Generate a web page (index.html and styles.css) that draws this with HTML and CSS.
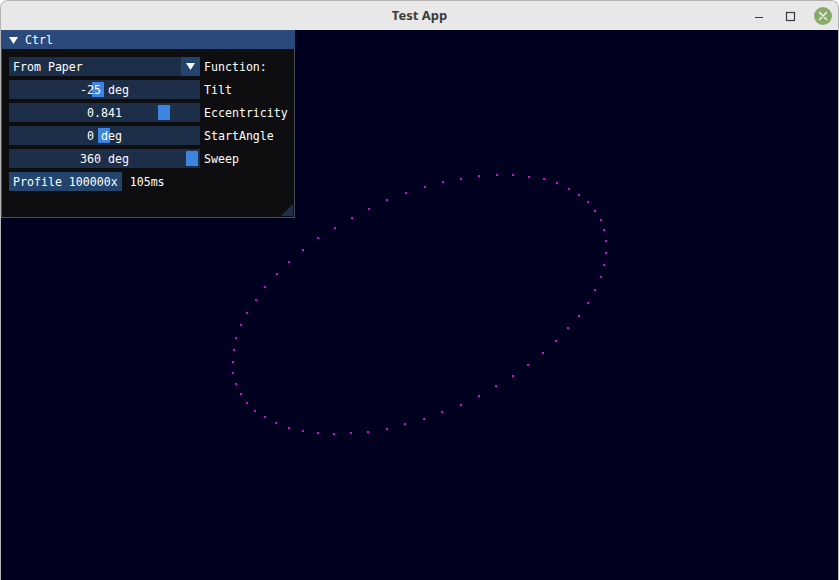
FILE: index.html
```html
<!DOCTYPE html>
<html>
<head>
<meta charset="utf-8">
<link rel="stylesheet" href="styles.css">
</head>
<body>
<div class="window">
  <div class="titlebar">
    <div class="title">Test App</div>
    <div class="controls">
      <svg class="ctl min" width="12" height="12" viewBox="0 0 12 12"><line x1="1" y1="7.5" x2="9" y2="7.5" stroke="#3c3c3c" stroke-width="1.2"/></svg>
      <svg class="ctl max" width="12" height="12" viewBox="0 0 12 12"><rect x="2.5" y="2.5" width="8" height="8" fill="none" stroke="#3c3c3c" stroke-width="1.2"/></svg>
      <div class="close"><svg width="18" height="18" viewBox="0 0 18 18"><path d="M5.5 5.5 L12.5 12.5 M12.5 5.5 L5.5 12.5" stroke="#fff" stroke-width="1.4" stroke-linecap="round"/></svg></div>
    </div>
  </div>
  <div class="canvas">
    <svg class="plot" width="837" height="549" viewBox="1 30 837 549">
      <g fill="#e000e0">
        <rect x="405" y="192" width="2" height="2"/><rect x="386" y="199" width="2" height="2"/><rect x="368" y="208" width="2" height="2"/><rect x="351" y="217" width="2" height="2"/><rect x="334" y="227" width="2" height="2"/><rect x="317" y="237" width="2" height="2"/><rect x="302" y="249" width="2" height="2"/><rect x="288" y="261" width="2" height="2"/><rect x="276" y="273" width="2" height="2"/><rect x="264" y="286" width="2" height="2"/><rect x="255" y="299" width="2" height="2"/>
        <rect x="246" y="312" width="2" height="2"/><rect x="240" y="324" width="2" height="2"/><rect x="235" y="337" width="2" height="2"/><rect x="233" y="349" width="2" height="2"/><rect x="232" y="361" width="2" height="2"/><rect x="232" y="372" width="2" height="2"/><rect x="235" y="383" width="2" height="2"/><rect x="240" y="393" width="2" height="2"/><rect x="246" y="402" width="2" height="2"/><rect x="254" y="410" width="2" height="2"/><rect x="264" y="416" width="2" height="2"/><rect x="275" y="422" width="2" height="2"/><rect x="288" y="427" width="2" height="2"/><rect x="302" y="430" width="2" height="2"/><rect x="317" y="432" width="2" height="2"/><rect x="333" y="433" width="2" height="2"/><rect x="350" y="432" width="2" height="2"/><rect x="367" y="431" width="2" height="2"/><rect x="386" y="428" width="2" height="2"/><rect x="404" y="423" width="2" height="2"/>
        <rect x="423" y="418" width="2" height="2"/><rect x="441" y="411" width="2" height="2"/><rect x="460" y="404" width="2" height="2"/><rect x="478" y="395" width="2" height="2"/><rect x="495" y="385" width="2" height="2"/><rect x="512" y="375" width="2" height="2"/><rect x="527" y="364" width="2" height="2"/><rect x="542" y="352" width="2" height="2"/><rect x="555" y="340" width="2" height="2"/><rect x="567" y="327" width="2" height="2"/><rect x="578" y="315" width="2" height="2"/><rect x="587" y="302" width="2" height="2"/><rect x="594" y="289" width="2" height="2"/>
        <rect x="600" y="276" width="2" height="2"/><rect x="603" y="264" width="2" height="2"/><rect x="605" y="252" width="2" height="2"/><rect x="605" y="240" width="2" height="2"/><rect x="603" y="229" width="2" height="2"/><rect x="600" y="219" width="2" height="2"/><rect x="594" y="210" width="2" height="2"/><rect x="587" y="201" width="2" height="2"/><rect x="578" y="194" width="2" height="2"/><rect x="568" y="188" width="2" height="2"/><rect x="556" y="182" width="2" height="2"/><rect x="543" y="178" width="2" height="2"/><rect x="528" y="176" width="2" height="2"/><rect x="512" y="174" width="2" height="2"/><rect x="496" y="174" width="2" height="2"/><rect x="478" y="175" width="2" height="2"/><rect x="460" y="178" width="2" height="2"/><rect x="442" y="181" width="2" height="2"/><rect x="424" y="186" width="2" height="2"/>
      </g>
    </svg>

    <div class="panel">
      <div class="panel-title">
        <svg class="collapse" width="9" height="7" viewBox="0 0 9 7"><polygon points="0,0 9,0 4.5,7" fill="#fff"/></svg>
        <span class="txt">Ctrl</span>
      </div>
      <div class="panel-body">
        <div class="row">
          <div class="frame combo">
            <span class="combo-text txt">From Paper</span>
            <div class="combo-btn"><svg width="9" height="7" viewBox="0 0 9 7"><polygon points="0,0 9,0 4.5,7" fill="#fff"/></svg></div>
          </div>
          <span class="label txt">Function:</span>
        </div>
        <div class="row">
          <div class="frame slider"><div class="grab" style="left:83px"></div><span class="val txt">-25 deg</span></div>
          <span class="label txt">Tilt</span>
        </div>
        <div class="row">
          <div class="frame slider"><div class="grab" style="left:149px"></div><span class="val txt">0.841</span></div>
          <span class="label txt">Eccentricity</span>
        </div>
        <div class="row">
          <div class="frame slider"><div class="grab" style="left:89px"></div><span class="val txt">0 deg</span></div>
          <span class="label txt">StartAngle</span>
        </div>
        <div class="row">
          <div class="frame slider"><div class="grab" style="left:177px"></div><span class="val txt">360 deg</span></div>
          <span class="label txt">Sweep</span>
        </div>
        <div class="row">
          <div class="button"><span class="txt">Profile 100000x</span></div>
          <span class="timing txt">105ms</span>
        </div>
      </div>
      <svg class="grip" width="12" height="12" viewBox="0 0 12 12"><polygon points="12,0 12,12 0,12" fill="#1c2f4c"/></svg>
    </div>
  </div>
</div>
</body>
</html>
```

FILE: styles.css
```css
html, body {
  margin: 0;
  padding: 0;
  background: #ffffff;
}

.window {
  width: 839px;
  height: 580px;
  box-sizing: border-box;
  border: 1px solid #b4b4b4;
  border-bottom: none;
  border-radius: 8px 8px 0 0;
  overflow: hidden;
  display: flex;
  flex-direction: column;
}

.titlebar {
  height: 29px;
  flex: none;
  background: #e8e8e8;
  position: relative;
  display: flex;
  align-items: center;
  justify-content: center;
}

.title {
  font-family: "Noto Sans", "DejaVu Sans", sans-serif;
  font-weight: bold;
  font-size: 13px;
  color: #3c3c3c;
  margin-top: -1px;
}

.controls {
  position: absolute;
  right: 0;
  top: 0;
  height: 29px;
  display: flex;
  align-items: center;
}

.ctl {
  display: block;
}

.min {
  margin-right: 18px;
}

.max {
  margin-right: 18px;
}

.close {
  width: 18px;
  height: 18px;
  border-radius: 50%;
  background: #8aaa6c;
  margin-right: 6px;
}

.close svg {
  display: block;
}

.canvas {
  flex: 1;
  background: #00001f;
  position: relative;
}

.plot {
  position: absolute;
  left: 0;
  top: 0;
  display: block;
}

.panel {
  position: absolute;
  left: 0;
  top: 0;
  width: 294px;
  height: 188px;
  box-sizing: border-box;
  background: #0e0e10;
  border: 1px solid #4c4c58;
  border-top: none;
  font-family: "DejaVu Sans Mono", "Liberation Mono", monospace;
  font-size: 11.6px;
  color: #ffffff;
}

.txt {
  line-height: 13px;
  padding-top: 2px;
}

.panel-title {
  height: 19px;
  background: #294a7a;
  margin: 0 -1px 0 -1px;
  display: flex;
  align-items: center;
  padding-left: 8px;
}

.collapse {
  display: block;
  margin-right: 7px;
  margin-top: 1px;
}

.panel-body {
  padding: 8px 0 0 7px;
  display: flex;
  flex-direction: column;
  gap: 4px;
}

.row {
  display: flex;
  align-items: center;
  height: 19px;
}

.frame {
  width: 191px;
  height: 19px;
  background: #1d2e49;
  position: relative;
  box-sizing: border-box;
}

.label {
  margin-left: 4px;
}

.combo {
  display: flex;
  align-items: center;
}

.combo-text {
  padding-left: 4px;
  flex: 1;
}

.combo-btn {
  width: 19px;
  height: 19px;
  background: #23456d;
  display: flex;
  align-items: center;
  justify-content: center;
}

.combo-btn svg {
  display: block;
}

.slider {
  display: flex;
  align-items: center;
  justify-content: center;
}

.grab {
  position: absolute;
  top: 2px;
  width: 12px;
  height: 15px;
  background: #3d85e0;
}

.val {
  position: relative;
}

.button {
  height: 19px;
  padding: 0 4px;
  background: #23456d;
  display: flex;
  align-items: center;
}

.timing {
  margin-left: 8px;
}

.grip {
  position: absolute;
  right: 1px;
  bottom: 1px;
  display: block;
}
```
